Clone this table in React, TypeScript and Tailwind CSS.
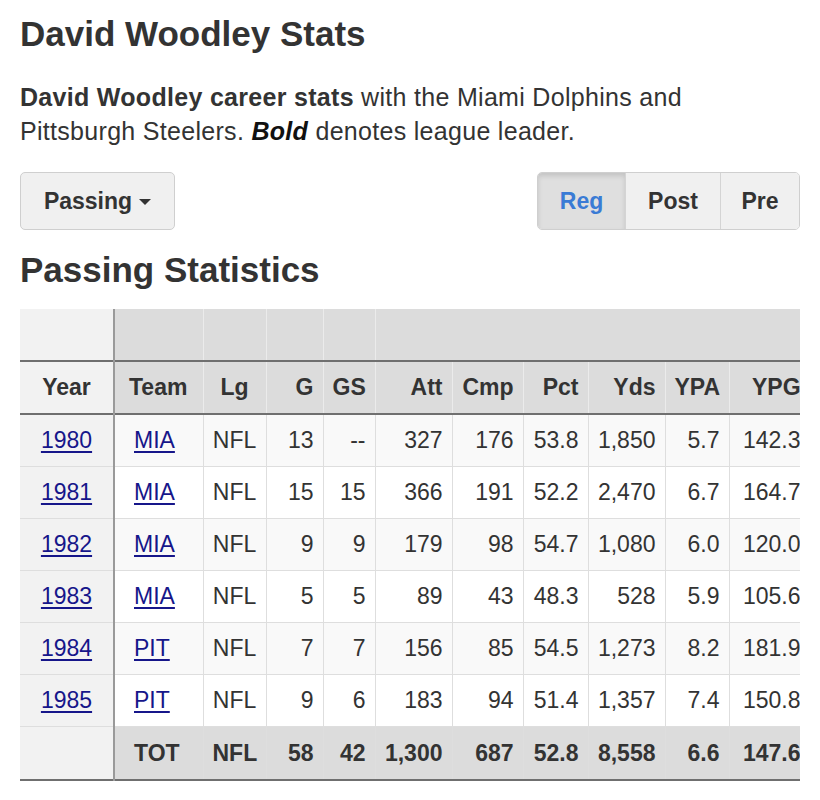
// Player career stats page: heading, blurb, stat-type dropdown + season
// toggle, then the passing table (clipped on the right like a scroller).

const FONT = "font-['Liberation_Sans',Arial,sans-serif]";

const rows = [
  { year: "1980", team: "MIA", g: "13", gs: "--", att: "327", cmp: "176", pct: "53.8", yds: "1,850", ypa: "5.7", ypg: "142.3" },
  { year: "1981", team: "MIA", g: "15", gs: "15", att: "366", cmp: "191", pct: "52.2", yds: "2,470", ypa: "6.7", ypg: "164.7" },
  { year: "1982", team: "MIA", g: "9", gs: "9", att: "179", cmp: "98", pct: "54.7", yds: "1,080", ypa: "6.0", ypg: "120.0" },
  { year: "1983", team: "MIA", g: "5", gs: "5", att: "89", cmp: "43", pct: "48.3", yds: "528", ypa: "5.9", ypg: "105.6" },
  { year: "1984", team: "PIT", g: "7", gs: "7", att: "156", cmp: "85", pct: "54.5", yds: "1,273", ypa: "8.2", ypg: "181.9" },
  { year: "1985", team: "PIT", g: "9", gs: "6", att: "183", cmp: "94", pct: "51.4", yds: "1,357", ypa: "7.4", ypg: "150.8" },
];

const numKeys = ["g", "gs", "att", "cmp", "pct", "yds", "ypa", "ypg"] as const;

export default function App() {
  return (
    <div className={`${FONT} min-h-[800px] bg-white px-5 pt-[14px] text-[#333]`}>
      <h1 className="text-[35px] font-bold leading-[40px]">David Woodley Stats</h1>

      <p className="mt-[26px] text-[25px] leading-[34px] tracking-[0.3px]">
        <strong>David Woodley career stats</strong> with the Miami Dolphins and Pittsburgh Steelers.{" "}
        <strong>
          <em className="text-[#111]">Bold</em>
        </strong>{" "}
        denotes league leader.
      </p>

      <Controls />

      <h2 className="mt-[20px] text-[35px] font-bold leading-[40px]">Passing Statistics</h2>

      <div className="mt-[19px] w-[780px] overflow-hidden">
        <StatsTable />
      </div>
    </div>
  );
}

// ── Components ────────────────────────────────────────────────────────────────

function Controls() {
  return (
    <div className="mt-[24px] flex items-center justify-between">
      <button className="flex h-[58px] w-[155px] items-center justify-center gap-[7px] rounded-[5px] border border-[#cfcfcf] bg-[#f0f0f0] text-[23px] font-bold text-[#333]">
        Passing
        <span className="mt-[2px] h-0 w-0 border-x-[6px] border-t-[6px] border-x-transparent border-t-[#333]" />
      </button>

      <div className="flex h-[58px] overflow-hidden rounded-[5px] border border-[#cfcfcf] text-[23px] font-bold">
        <button className="w-[87px] bg-[#dfdfdf] text-[#3a7bd5] shadow-[inset_0_3px_5px_rgba(0,0,0,0.125)]">
          Reg
        </button>
        <button className="w-[95px] border-l border-[#d4d4d4] bg-[#f0f0f0] text-[#333]">Post</button>
        <button className="w-[79px] border-l border-[#d4d4d4] bg-[#f0f0f0] text-[#333]">Pre</button>
      </div>
    </div>
  );
}

function StatsTable() {
  const th = "h-[52px] border-x border-[#ebebeb] px-[9px] text-[23px] font-bold";
  const td = "h-[52px] border border-[#dedede] px-[9px] text-[23px]";
  const yearCell =
    "relative z-10 border-r-2 border-r-[#9a9a9a] bg-[#f2f2f2] shadow-[3px_0_4px_rgba(0,0,0,0.12)]";
  const link = "text-[#16168a] underline underline-offset-[3px]";

  return (
    <table className="w-[790px] table-fixed border-collapse">
      <colgroup>
        <col className="w-[94px]" />
        <col className="w-[89px]" />
        <col className="w-[63px]" />
        <col className="w-[57px]" />
        <col className="w-[52px]" />
        <col className="w-[77px]" />
        <col className="w-[71px]" />
        <col className="w-[65px]" />
        <col className="w-[77px]" />
        <col className="w-[64px]" />
        <col className="w-[81px]" />
      </colgroup>
      <thead className="bg-[#dcdcdc]">
        <tr className="border-b-2 border-[#6f6f6f]">
          <th className={`${th} ${yearCell} bg-[#dcdcdc] border-l-0`} />
          <th className={th} />
          <th className={th} />
          <th className={th} />
          <th className={th} />
          <th className={th} colSpan={6} />
        </tr>
        <tr className="h-[53px] border-b-2 border-[#6f6f6f]">
          <th className={`${th} ${yearCell} bg-[#dcdcdc] border-l-0 text-center`}>Year</th>
          <th className={`${th} text-left pl-[14px]`}>Team</th>
          <th className={`${th} text-center`}>Lg</th>
          <th className={`${th} text-right`}>G</th>
          <th className={`${th} text-right`}>GS</th>
          <th className={`${th} text-right`}>Att</th>
          <th className={`${th} text-right`}>Cmp</th>
          <th className={`${th} text-right`}>Pct</th>
          <th className={`${th} text-right`}>Yds</th>
          <th className={`${th} text-right`}>YPA</th>
          <th className={`${th} text-right`}>YPG</th>
        </tr>
      </thead>
      <tbody>
        {rows.map((r, i) => (
          <tr key={r.year} className={i % 2 === 0 ? "bg-[#f9f9f9]" : "bg-white"}>
            <td className={`${td} ${yearCell} border-l-0 text-center`}>
              <a href="#" className={link}>
                {r.year}
              </a>
            </td>
            <td className={`${td} pl-[19px] text-left`}>
              <a href="#" className={link}>
                {r.team}
              </a>
            </td>
            <td className={`${td} text-center`}>NFL</td>
            {numKeys.map((k) => (
              <td key={k} className={`${td} text-right`}>
                {r[k]}
              </td>
            ))}
          </tr>
        ))}
        <tr className="h-[54px] border-b-2 border-[#6f6f6f] bg-[#dcdcdc] font-bold">
          <td className={`${td} ${yearCell} bg-[#dcdcdc] border-l-0`} />
          <td className={`${td} pl-[19px] text-left`}>TOT</td>
          <td className={`${td} text-center`}>NFL</td>
          {["58", "42", "1,300", "687", "52.8", "8,558", "6.6", "147.6"].map((v, i) => (
            <td key={i} className={`${td} text-right`}>
              {v}
            </td>
          ))}
        </tr>
      </tbody>
    </table>
  );
}
